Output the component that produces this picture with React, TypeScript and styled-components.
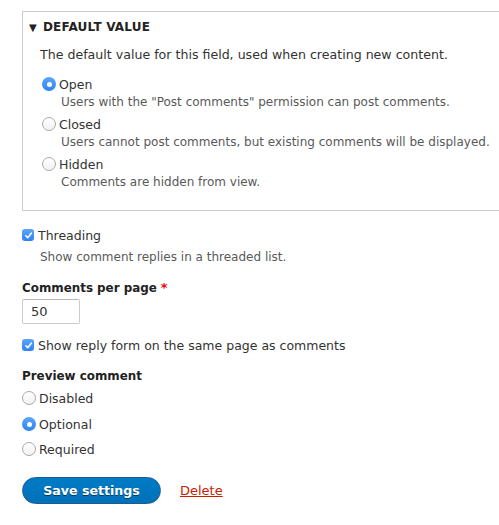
import React from "react";
import styled, { createGlobalStyle } from "styled-components";

const Global = createGlobalStyle`
  html, body { margin: 0; padding: 0; overflow: hidden; background: #fff; }
  body { font-family: "DejaVu Sans", sans-serif; color: #333; }
`;

const Page = styled.div`
  padding: 11px 0 0 22px;
  display: flex;
  flex-direction: column;
`;

const Details = styled.div`
  box-sizing: border-box;
  width: 478px;
  border: 1px solid #ccc;
  padding: 0 0 20px 0;
`;

const Summary = styled.div`
  display: flex;
  align-items: center;
  height: 30px;
  padding: 0 0 0 6px;
  font-size: 12px;
  font-weight: bold;
  text-transform: uppercase;
  color: #222;
  letter-spacing: 0.2px;
`;

const Triangle = styled.span`
  font-size: 10px;
  margin-right: 6px;
`;

const DetailsBody = styled.div`
  padding: 0 0 0 17px;
  display: flex;
  flex-direction: column;
`;

const Lead = styled.div`
  font-size: 12.6px;
  line-height: 18px;
  margin: 4px 0 10px;
`;

const Option = styled.div<{ $gap?: number; $inset?: number }>`
  display: flex;
  flex-direction: column;
  margin-top: ${(p) => p.$gap ?? 0}px;
  padding-left: ${(p) => p.$inset ?? 0}px;
`;

const ChoiceRow = styled.label`
  display: flex;
  align-items: center;
  height: 20px;
  font-size: 12.5px;
  color: #333;
  white-space: nowrap;
`;

const RadioDot = styled.span<{ $on?: boolean }>`
  box-sizing: border-box;
  width: 14px;
  height: 14px;
  border-radius: 50%;
  margin-right: 3px;
  flex: none;
  display: flex;
  align-items: center;
  justify-content: center;
  border: ${(p) => (p.$on ? "none" : "1px solid #a9a9a9")};
  background: ${(p) => (p.$on ? "linear-gradient(#5ca6fb, #2d83f5)" : "linear-gradient(#fff, #f2f2f2)")};
  &::after {
    content: "";
    display: ${(p) => (p.$on ? "block" : "none")};
    width: 5px;
    height: 5px;
    border-radius: 50%;
    background: #fff;
  }
`;

const CheckBox = styled.span`
  box-sizing: border-box;
  width: 12px;
  height: 12px;
  border-radius: 3px;
  margin-right: 4px;
  flex: none;
  background: linear-gradient(#5ca6fb, #2d83f5);
  display: flex;
  align-items: center;
  justify-content: center;
`;

const Desc = styled.div<{ $indent: number; $top?: number }>`
  font-size: 12px;
  line-height: 16px;
  color: #595959;
  white-space: nowrap;
  padding-left: ${(p) => p.$indent}px;
  margin-top: ${(p) => p.$top ?? 0}px;
`;

const Section = styled.div<{ $top: number }>`
  display: flex;
  flex-direction: column;
  margin-top: ${(p) => p.$top}px;
`;

const FieldLabel = styled.div`
  font-size: 11.9px;
  font-weight: bold;
  line-height: 18px;
  color: #222;
`;

const Required = styled.span`
  color: #e00;
  margin-left: 4px;
  font-size: 13px;
`;

const TextInput = styled.div`
  box-sizing: border-box;
  width: 58px;
  height: 25px;
  border: 1px solid #ccc;
  border-top-color: #b8b8b8;
  border-radius: 2px;
  margin-top: 2px;
  padding: 0 8px;
  display: flex;
  align-items: center;
  font-size: 13px;
  color: #333;
`;

const Actions = styled.div`
  display: flex;
  align-items: center;
  margin-top: 18px;
`;

const Button = styled.button`
  width: 139px;
  height: 27px;
  border-radius: 14px;
  border: 1px solid #1e5c90;
  background: linear-gradient(#007bc6, #0071b8);
  color: #fff;
  font-family: "DejaVu Sans", sans-serif;
  font-weight: bold;
  font-size: 12.6px;
  padding: 0;
  text-shadow: 0 1px rgba(0, 0, 0, 0.5);
`;

const DeleteLink = styled.a`
  margin-left: 19px;
  color: #c72100;
  font-size: 13px;
  text-decoration: underline;
`;

const Check = () => (
  <svg width="9" height="9" viewBox="0 0 9 9">
    <path d="M1.8 4.8 L3.7 6.7 L7.3 2.2" stroke="#fff" strokeWidth="1.6" fill="none" strokeLinecap="round" strokeLinejoin="round" />
  </svg>
);

export default function App() {
  return (
    <>
      <Global />
      <Page>
        <Details>
          <Summary>
            <Triangle>▼</Triangle>Default value
          </Summary>
          <DetailsBody>
            <Lead>The default value for this field, used when creating new content.</Lead>
            <Option $inset={2}>
              <ChoiceRow><RadioDot $on />Open</ChoiceRow>
              <Desc $indent={19}>Users with the "Post comments" permission can post comments.</Desc>
            </Option>
            <Option $gap={4} $inset={2}>
              <ChoiceRow><RadioDot />Closed</ChoiceRow>
              <Desc $indent={19}>Users cannot post comments, but existing comments will be displayed.</Desc>
            </Option>
            <Option $gap={4} $inset={2}>
              <ChoiceRow><RadioDot />Hidden</ChoiceRow>
              <Desc $indent={19}>Comments are hidden from view.</Desc>
            </Option>
          </DetailsBody>
        </Details>

        <Section $top={14}>
          <ChoiceRow><CheckBox><Check /></CheckBox>Threading</ChoiceRow>
          <Desc $indent={18} $top={4}>Show comment replies in a threaded list.</Desc>
        </Section>

        <Section $top={14}>
          <FieldLabel>Comments per page<Required>*</Required></FieldLabel>
          <TextInput>50</TextInput>
        </Section>

        <Section $top={11}>
          <ChoiceRow><CheckBox><Check /></CheckBox>Show reply form on the same page as comments</ChoiceRow>
        </Section>

        <Section $top={12}>
          <FieldLabel>Preview comment</FieldLabel>
          <Option $gap={3}><ChoiceRow><RadioDot />Disabled</ChoiceRow></Option>
          <Option $gap={6}><ChoiceRow><RadioDot $on />Optional</ChoiceRow></Option>
          <Option $gap={5}><ChoiceRow><RadioDot />Required</ChoiceRow></Option>
        </Section>

        <Actions>
          <Button>Save settings</Button>
          <DeleteLink href="#">Delete</DeleteLink>
        </Actions>
      </Page>
    </>
  );
}
